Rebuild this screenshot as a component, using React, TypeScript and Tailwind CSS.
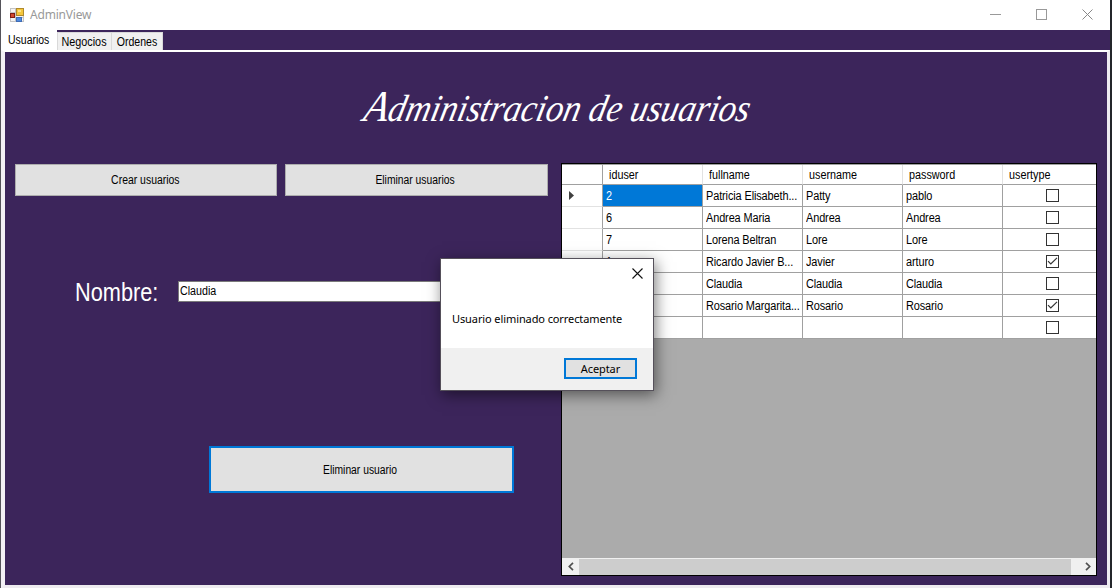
import React from "react";

const columns = ["iduser", "fullname", "username", "password"];
const rows = [
  { id: "2", full: "Patricia Elisabeth...", user: "Patty", pass: "pablo", admin: false },
  { id: "6", full: "Andrea Maria", user: "Andrea", pass: "Andrea", admin: false },
  { id: "7", full: "Lorena Beltran", user: "Lore", pass: "Lore", admin: false },
  { id: "1", full: "Ricardo Javier B...", user: "Javier", pass: "arturo", admin: true },
  { id: "8", full: "Claudia", user: "Claudia", pass: "Claudia", admin: false },
  { id: "9", full: "Rosario Margarita...", user: "Rosario", pass: "Rosario", admin: true },
  { id: "", full: "", user: "", pass: "", admin: false },
];

function AppIcon() {
  return (
    <svg width="14" height="14" viewBox="0 0 14 14" shapeRendering="crispEdges">
      <rect x="0.5" y="0.5" width="13" height="13" fill="#f4f4f4" stroke="#c4c4c4" />
      <path d="M5.5 1v12M1 9.5h12M1 4.5h5" stroke="#c4c4c4" />
      <rect x="6.5" y="0.5" width="7" height="7" fill="#f3c63c" stroke="#b08a2c" />
      <rect x="8" y="2" width="3" height="2" fill="#fce38a" />
      <rect x="0.5" y="5.5" width="4" height="4" fill="#d2492f" stroke="#7e1d14" />
      <rect x="6.5" y="9.5" width="5" height="4" fill="#4e8ae0" stroke="#3f6cb5" />
    </svg>
  );
}

function Checkbox({ checked }: { checked: boolean }) {
  return (
    <svg width="13" height="13" viewBox="0 0 13 13">
      <rect x="0.5" y="0.5" width="12" height="12" fill="#fff" stroke="#333" />
      {checked && <path d="M2 6.2 4.8 9 11 2.9" fill="none" stroke="#333" strokeWidth="1.2" />}
    </svg>
  );
}

function DataCell({ text, selected = false }: { text: string; selected?: boolean }) {
  return (
    <div
      className={
        "flex w-[100px] shrink-0 items-center overflow-hidden whitespace-nowrap border-r border-b border-[#a0a0a0] pl-[3px] " +
        (selected ? "bg-[#0078d7] text-white" : "bg-white")
      }
    >
      <span className="inline-block origin-left scale-x-[0.91] tracking-[-0.12px]">{text}</span>
    </div>
  );
}

function UserGrid() {
  return (
    <div className="flex h-[413px] w-[536px] flex-col border border-black bg-[#ababab]">
      <div className="flex h-[21px] shrink-0 border-t border-[#a0a0a0] bg-white">
        <div className="w-[41px] shrink-0 border-r border-b border-[#a0a0a0]" />
        {columns.map((c) => (
          <div key={c} className="flex w-[100px] shrink-0 items-center border-r border-b border-r-[#e2e2e2] border-b-[#a0a0a0] pl-[6px]">
            <span className="inline-block origin-left scale-x-[0.9]">{c}</span>
          </div>
        ))}
        <div className="flex flex-1 items-center border-b border-[#a0a0a0] pl-[6px]">
          <span className="inline-block origin-left scale-x-[0.9]">usertype</span>
        </div>
      </div>
      {rows.map((r, i) => (
        <div key={i} className="flex h-[22px] shrink-0">
          <div className="flex w-[41px] shrink-0 items-center border-r border-b border-r-[#a0a0a0] border-b-[#e2e2e2] bg-white pl-[7px]">
            {i === 0 && (
              <svg width="5" height="9" viewBox="0 0 5 9">
                <path d="M0 0 5 4.5 0 9z" fill="#404040" />
              </svg>
            )}
          </div>
          <DataCell text={r.id} selected={i === 0} />
          <DataCell text={r.full} />
          <DataCell text={r.user} />
          <DataCell text={r.pass} />
          <div className="flex flex-1 items-center border-b border-[#a0a0a0] bg-white pl-[43px]">
            <Checkbox checked={r.admin} />
          </div>
        </div>
      ))}
      <div className="mt-auto flex h-[17px] shrink-0 items-center bg-[#f0f0f0]">
        <div className="flex w-[17px] justify-center">
          <svg width="6" height="9" viewBox="0 0 6 9">
            <path d="M5 .8 1.3 4.5 5 8.2" fill="none" stroke="#505050" strokeWidth="1.7" />
          </svg>
        </div>
        <div className="h-[16px] w-[492px] bg-[#cdcdcd]" />
        <div className="flex flex-1 justify-center pl-2">
          <svg width="6" height="9" viewBox="0 0 6 9">
            <path d="M1 .8 4.7 4.5 1 8.2" fill="none" stroke="#505050" strokeWidth="1.7" />
          </svg>
        </div>
      </div>
    </div>
  );
}

function MessageDialog() {
  return (
    <div className="absolute top-[258px] left-[439px] flex h-[133px] w-[214px] flex-col border border-[#55505a] bg-white font-['Noto_Sans',sans-serif] text-[11px] shadow-[2px_4px_14px_rgba(0,0,0,0.5)]">
      <div className="flex h-[28px] items-center justify-end pr-[10px]">
        <svg width="11" height="11" viewBox="0 0 11 11">
          <path d="M.5.5l10 10M10.5.5l-10 10" stroke="#111" strokeWidth="1.1" />
        </svg>
      </div>
      <div className="flex flex-1 items-center pt-[2px] pl-[11px] tracking-[-0.1px] whitespace-nowrap">
        Usuario eliminado correctamente
      </div>
      <div className="flex h-[42px] items-center justify-end bg-[#f0f0f0] pr-[16px]">
        <button className="mb-px h-[21px] w-[73px] border-2 border-[#0078d7] bg-[#e1e1e1] leading-none tracking-[-0.1px]">Aceptar</button>
      </div>
    </div>
  );
}

export default function App() {
  return (
    <div className="relative flex h-[588px] w-[1112px] flex-col overflow-hidden border-r-2 border-l border-r-[#24262b] border-l-[#55535a] bg-[#3c255b] font-['Liberation_Sans',sans-serif] text-[12px] leading-[14px] text-black">
      <header className="flex h-[30px] shrink-0 items-center bg-white pl-[9px]">
        <AppIcon />
        <span className="ml-[6px] font-['Noto_Sans',sans-serif] text-[12px] tracking-[-0.2px] text-[#999]">AdminView</span>
        <div className="ml-auto flex items-center gap-[35px] pr-[17px] pb-[2px]">
          <svg width="11" height="11" viewBox="0 0 11 11"><path d="M0 5.5h11" stroke="#999" /></svg>
          <svg width="11" height="11" viewBox="0 0 11 11"><rect x=".5" y=".5" width="10" height="10" fill="none" stroke="#999" /></svg>
          <svg width="11" height="11" viewBox="0 0 11 11"><path d="M.5.5l10 10M10.5.5l-10 10" stroke="#888" /></svg>
        </div>
      </header>
      <nav className="flex h-5 shrink-0 items-end">
        <div className="flex h-5 w-[56px] items-center justify-center bg-white">
          <span className="inline-block scale-x-[0.87]">Usuarios</span>
        </div>
        <div className="flex h-[18px] w-[55px] items-center justify-center border-t border-r border-l border-[#d9d9d9] bg-[#f0f0f0]">
          <span className="inline-block scale-x-[0.9]">Negocios</span>
        </div>
        <div className="flex h-[18px] w-[51px] items-center justify-center border-t border-r border-[#d9d9d9] bg-[#f0f0f0]">
          <span className="inline-block scale-x-[0.88]">Ordenes</span>
        </div>
      </nav>
      <main className="flex flex-1 flex-col border-t-2 border-r-3 border-b-3 border-l-4 border-t-white border-r-[#eeebf0] border-b-[#eeebf0] border-l-[#f3f0f5]">
        <h1 className="flex h-[111px] shrink-0 justify-center pt-[33px] font-['Liberation_Serif',serif] text-[38px] leading-[44px] whitespace-nowrap text-white italic">
          <span className="ml-[4px] inline-block h-[44px] scale-x-[0.91] -skew-x-[14deg]">
            <span className="text-[44px] leading-none">A</span>dministracion de usuarios
          </span>
        </h1>
        <div className="flex">
          <section className="flex w-[556px] shrink-0 flex-col pt-[1px] pl-[10px]">
            <div className="flex gap-[8px]">
              <button className="h-[32px] w-[262px] border border-[#adadad] bg-[#e1e1e1] pr-[2px]">
                <span className="inline-block scale-x-[0.87]">Crear usuarios</span>
              </button>
              <button className="h-[32px] w-[263px] border border-[#adadad] bg-[#e1e1e1] pr-[2px]">
                <span className="inline-block scale-x-[0.86]">Eliminar usuarios</span>
              </button>
            </div>
            <div className="mt-[79px] flex h-[32px] items-center pl-[60px]">
              <label className="w-[103px] pt-[2px] text-[25px] leading-[30px] text-white">
                <span className="inline-block origin-left scale-x-[0.87]">Nombre:</span>
              </label>
              <div className="flex h-[21px] w-[290px] items-center border border-[#7a7a7a] bg-white pl-[1px]">
                <span className="inline-block origin-left scale-x-[0.89]">Claudia</span>
              </div>
            </div>
            <button className="mt-[139px] ml-[194px] h-[47px] w-[305px] border-2 border-[#0078d7] bg-[#e1e1e1] pr-[2px]">
              <span className="inline-block scale-x-[0.86]">Eliminar usuario</span>
            </button>
          </section>
          <UserGrid />
        </div>
      </main>
      <MessageDialog />
    </div>
  );
}
